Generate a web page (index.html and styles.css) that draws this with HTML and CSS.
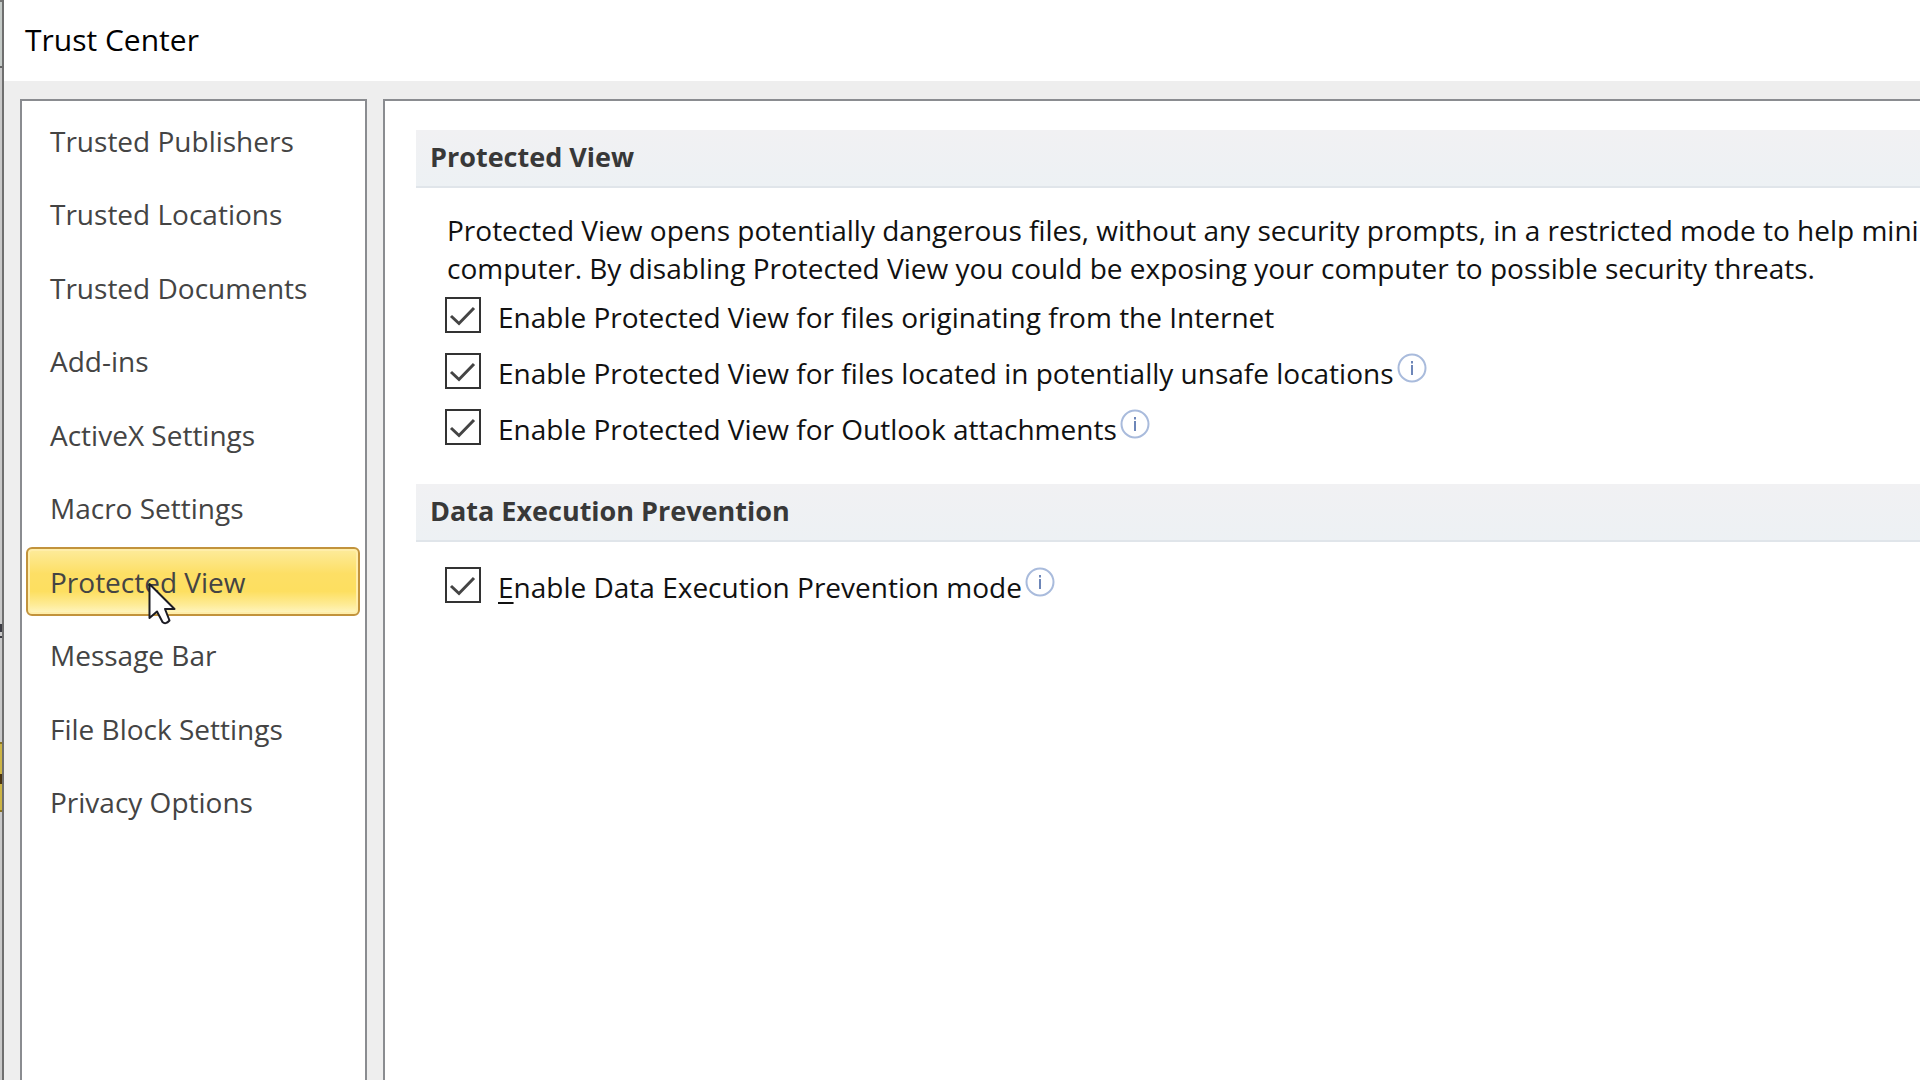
FILE: index.html
```html
<!DOCTYPE html>
<html lang="en">
<head>
<meta charset="utf-8">
<title>Trust Center</title>
<link rel="stylesheet" href="styles.css">
</head>
<body>
<div class="backdrop" aria-hidden="true">
  <div class="backdrop-toolbar"></div>
  <div class="backdrop-body"></div>
  <div class="backdrop-glyph"></div>
  <div class="backdrop-gap"></div>
  <div class="backdrop-button"></div>
  <div class="backdrop-rest"></div>
</div>
<div class="dialog">
  <header class="titlebar"><h1 class="title">Trust Center</h1></header>
  <div class="content">
    <nav class="sidebar" aria-label="Categories">
      <ul class="categories">
        <li><button class="category" type="button">Trusted Publishers</button></li>
        <li><button class="category" type="button">Trusted Locations</button></li>
        <li><button class="category" type="button">Trusted Documents</button></li>
        <li><button class="category" type="button">Add-ins</button></li>
        <li><button class="category" type="button">ActiveX Settings</button></li>
        <li><button class="category" type="button">Macro Settings</button></li>
        <li class="current">
          <button class="category selected" type="button" aria-current="page">Protected View</button>
          <svg class="pointer" viewBox="0 0 28 43" aria-hidden="true"><path d="M1.5 2V36L9 29.500L14.500 40Q17.500 43 21.500 38.500L17 27H26.500Z"/></svg>
        </li>
        <li><button class="category" type="button">Message Bar</button></li>
        <li><button class="category" type="button">File Block Settings</button></li>
        <li><button class="category" type="button">Privacy Options</button></li>
      </ul>
    </nav>
    <main class="panel">
      <section class="group">
        <h2 class="heading">Protected View</h2>
        <p class="description">Protected View opens potentially dangerous files, without any security prompts, in a restricted mode to help minimize<br>computer. By disabling Protected View you could be exposing your computer to possible security threats.</p>
        <div class="options">
          <div class="option">
            <input class="check" type="checkbox" id="internet" checked>
            <label for="internet">Enable Protected View for files originating from the Internet</label>
          </div>
          <div class="option">
            <input class="check" type="checkbox" id="unsafe" checked>
            <label for="unsafe">Enable Protected View for files located in potentially unsafe locations</label>
            <svg class="info" viewBox="0 0 30 30" role="img" aria-label="Information"><circle cx="15" cy="15" r="13.500"/><path d="M15 12V22M15 8V10.500"/></svg>
          </div>
          <div class="option">
            <input class="check" type="checkbox" id="outlook" checked>
            <label for="outlook">Enable Protected View for Outlook attachments</label>
            <svg class="info" viewBox="0 0 30 30" role="img" aria-label="Information"><circle cx="15" cy="15" r="13.500"/><path d="M15 12V22M15 8V10.500"/></svg>
          </div>
        </div>
      </section>
      <section class="group">
        <h2 class="heading">Data Execution Prevention</h2>
        <div class="options spaced">
          <div class="option">
            <input class="check" type="checkbox" id="dep" checked>
            <label for="dep"><span class="accesskey">E</span>nable Data Execution Prevention mode</label>
            <svg class="info" viewBox="0 0 30 30" role="img" aria-label="Information"><circle cx="15" cy="15" r="13.500"/><path d="M15 12V22M15 8V10.500"/></svg>
          </div>
        </div>
      </section>
    </main>
  </div>
</div>
</body>
</html>
```
FILE: styles.css
```css
* {
  box-sizing: border-box;
}

body {
  margin: 0;
  min-height: 100vh;
  display: flex;
  background: #eeeeee;
  color: #111111;
  font-family: "Open Sans", "Noto Sans", sans-serif;
  font-size: 28px;
  line-height: 38px;
}

h1,
h2,
p,
ul {
  margin: 0;
  padding: 0;
}

/* Edge of the window behind the dialog */
.backdrop {
  flex: 0 0 4px;
  display: flex;
  flex-direction: column;
  overflow: hidden;
  border-right: 2px solid #6f6f6f;
  background: #c9c9c9;
}

.backdrop-toolbar {
  height: 68px;
  border-top: 2px solid #777777;
  border-bottom: 2px solid #666666;
  background: #c5cbc8;
}

.backdrop-body {
  height: 556px;
}

.backdrop-glyph {
  height: 14px;
  border: solid #3c3c44;
  border-width: 8px 0 2px;
}

.backdrop-gap {
  height: 104px;
}

.backdrop-button {
  height: 70px;
  border: solid #8a7420;
  border-width: 2px 0;
  background: linear-gradient(#cdb545 45%, #4a3410 45% 60%, #cdb545 60%);
}

.backdrop-rest {
  flex: 1;
}

.dialog {
  flex: 1;
  min-width: 0;
  display: flex;
  flex-direction: column;
}

.titlebar {
  padding: 20px 21px 21px;
  background: #ffffff;
}

.title {
  font-size: 30px;
  font-weight: 400;
  line-height: 40px;
  color: #000000;
}

.content {
  flex: 1;
  display: flex;
  gap: 16px;
  padding: 18px 0 0 16px;
}

.sidebar,
.panel {
  border: solid #8a8c90;
  background: #ffffff;
}

.sidebar {
  flex: 0 0 347px;
  border-width: 2px 2px 0;
  padding: 5px 5px 5px 4px;
}

.categories {
  min-height: 731px;
  display: flex;
  flex-direction: column;
  justify-content: space-between;
  list-style: none;
}

.current {
  position: relative;
}

.category {
  display: block;
  width: 100%;
  height: 69px;
  padding: 0 0 0 22px;
  border: 2px solid transparent;
  border-radius: 6px;
  background: none;
  font: inherit;
  text-align: left;
  color: #444444;
}

.selected {
  border-color: #c2933c;
  background: linear-gradient(#fdeb9c, #fddf65 38%, #fddf60 65%, #feeb94 85%, #fff6c4);
  box-shadow: inset 0 0 0 2px #ffeeaa;
}

.pointer {
  position: absolute;
  top: 35px;
  left: 122px;
  width: 28px;
  height: 43px;
  fill: #ffffff;
  stroke: #1c1c24;
  stroke-width: 2;
  stroke-linejoin: round;
}

.panel {
  flex: 1;
  min-width: 0;
  overflow: hidden;
  border-width: 2px 0 0 2px;
  padding: 29px 0 0 31px;
}

.group {
  margin-bottom: 36px;
}

.heading {
  height: 58px;
  padding: 8px 14px;
  border-bottom: 2px solid #e0e5ea;
  background: linear-gradient(#f1f1f3, #edf1f4);
  font-size: 27px;
  font-weight: 700;
  line-height: 38px;
  color: #383838;
}

.description {
  padding: 23px 0 0 31px;
  white-space: nowrap;
}

.options {
  display: flex;
  flex-direction: column;
  gap: 18px;
  padding: 11px 0 0 29px;
}

.spaced {
  padding-top: 26px;
}

.option {
  display: flex;
  align-items: center;
  height: 38px;
}

.check {
  appearance: none;
  flex: none;
  width: 36px;
  height: 36px;
  margin: 0 17px 4px 0;
  border: 2px solid #333333;
  background: #ffffff;
}

.check:checked {
  background: #ffffff url("data:image/svg+xml,%3Csvg xmlns='http://www.w3.org/2000/svg' viewBox='0 0 32 32'%3E%3Cpath d='M4 17L12 24.500L27 9' fill='none' stroke='%23444' stroke-width='3'/%3E%3C/svg%3E") center / 32px 32px;
}

.accesskey {
  text-decoration: underline;
  text-decoration-thickness: 2px;
  text-underline-offset: 4px;
}

.info {
  flex: none;
  width: 30px;
  height: 30px;
  margin: 0 0 10px 3px;
  fill: #ffffff;
  stroke: #a9bbdc;
  stroke-width: 2;
}

.info path {
  stroke: #6d86b8;
}
```
